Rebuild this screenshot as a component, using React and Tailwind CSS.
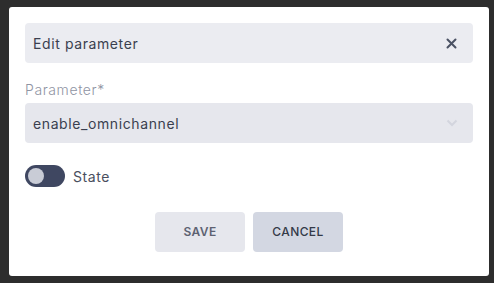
import React from "react";

export default function App() {
  return (
    <div className="w-[494px] h-[283px] bg-[#2d2d2d] pt-[7px] pl-[9px] pr-[5px] pb-[7px]" style={{ fontFamily: 'Inter, sans-serif' }}>
      <div className="w-[480px] h-[269px] bg-white rounded-[3px] px-4 pt-4 flex flex-col">
        <div className="h-10 bg-[#ebecf1] rounded-[4px] flex items-center justify-between pl-2 pr-4">
          <span className="text-[14px] tracking-[0.6px] text-[#3a3f4f]">Edit parameter</span>
          <svg width="11" height="11" viewBox="0 0 11 11" fill="none">
            <path d="M1.5 1.5L9.5 9.5M9.5 1.5L1.5 9.5" stroke="#4a5163" strokeWidth="2" strokeLinecap="round" />
          </svg>
        </div>
        <div className="mt-[17px] text-[14px] leading-[20px] tracking-[0.6px] font-light text-[#8f94a3]">Parameter*</div>
        <div className="mt-[3px] h-10 bg-[#e6e7ed] rounded-[4px] flex items-center justify-between pl-2 pr-[15px]">
          <span className="text-[14px] tracking-[0.6px] text-[#3a3f4f]">enable_omnichannel</span>
          <svg width="12" height="8" viewBox="0 0 12 8" fill="none">
            <path d="M1.5 1.5L6 6L10.5 1.5" stroke="#d3d5de" strokeWidth="2" />
          </svg>
        </div>
        <div className="mt-[22px] flex items-center gap-2">
          <div className="w-10 h-[22px] rounded-full bg-[#3f4761] flex items-center pl-[3px]">
            <div className="w-4 h-4 rounded-full bg-[#c9ccd6]" />
          </div>
          <span className="text-[14px] tracking-[0.6px] text-[#4a4f5e]">State</span>
        </div>
        <div className="mt-[25px] flex justify-center gap-2">
          <button className="w-[90px] h-10 rounded-[4px] bg-[#e6e7ed] text-[12px] font-semibold tracking-[0.4px] text-[#5d6272]">SAVE</button>
          <button className="w-[90px] h-10 rounded-[4px] bg-[#d3d7e2] text-[12px] font-medium tracking-[0.4px] text-[#343a48]">CANCEL</button>
        </div>
      </div>
    </div>
  );
}
